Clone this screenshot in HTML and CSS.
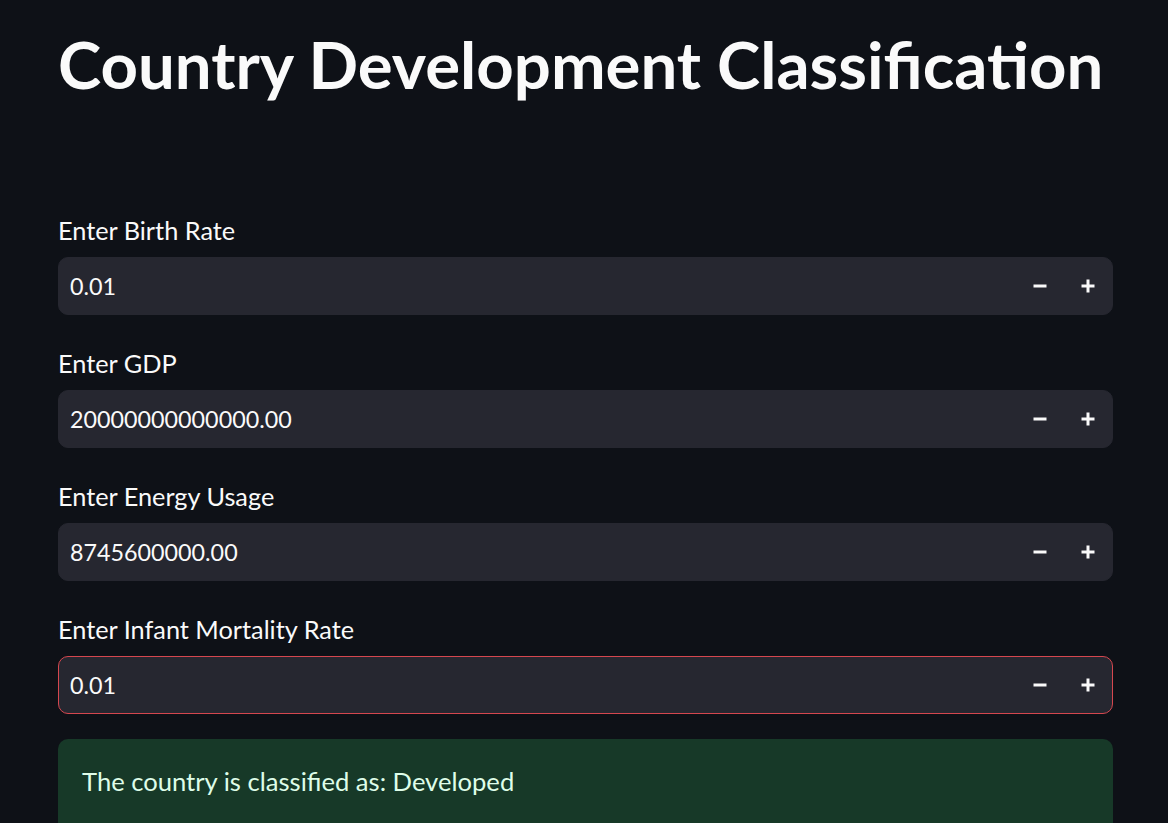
FILE: index.html
```html
<!DOCTYPE html>
<html>
<head>
<meta charset="utf-8">
<link rel="stylesheet" href="styles.css">
</head>
<body>
<main class="main">
  <h1 class="title">Country Development Classification</h1>
  <div class="fields">
    <div class="field">
      <label class="label">Enter Birth Rate</label>
      <div class="input">
        <span class="value">0.01</span>
        <span class="step"><svg width="14" height="14" viewBox="0 0 14 14"><rect x="0.5" y="5.5" width="13" height="3" fill="#fafafa"/></svg></span>
        <span class="step"><svg width="14" height="14" viewBox="0 0 14 14"><rect x="0.5" y="5.5" width="13" height="3" fill="#fafafa"/><rect x="5.5" y="0.5" width="3" height="13" fill="#fafafa"/></svg></span>
      </div>
    </div>
    <div class="field">
      <label class="label">Enter GDP</label>
      <div class="input">
        <span class="value">20000000000000.00</span>
        <span class="step"><svg width="14" height="14" viewBox="0 0 14 14"><rect x="0.5" y="5.5" width="13" height="3" fill="#fafafa"/></svg></span>
        <span class="step"><svg width="14" height="14" viewBox="0 0 14 14"><rect x="0.5" y="5.5" width="13" height="3" fill="#fafafa"/><rect x="5.5" y="0.5" width="3" height="13" fill="#fafafa"/></svg></span>
      </div>
    </div>
    <div class="field">
      <label class="label">Enter Energy Usage</label>
      <div class="input">
        <span class="value">8745600000.00</span>
        <span class="step"><svg width="14" height="14" viewBox="0 0 14 14"><rect x="0.5" y="5.5" width="13" height="3" fill="#fafafa"/></svg></span>
        <span class="step"><svg width="14" height="14" viewBox="0 0 14 14"><rect x="0.5" y="5.5" width="13" height="3" fill="#fafafa"/><rect x="5.5" y="0.5" width="3" height="13" fill="#fafafa"/></svg></span>
      </div>
    </div>
    <div class="field">
      <label class="label">Enter Infant Mortality Rate</label>
      <div class="input focused">
        <span class="value">0.01</span>
        <span class="step"><svg width="14" height="14" viewBox="0 0 14 14"><rect x="0.5" y="5.5" width="13" height="3" fill="#fafafa"/></svg></span>
        <span class="step"><svg width="14" height="14" viewBox="0 0 14 14"><rect x="0.5" y="5.5" width="13" height="3" fill="#fafafa"/><rect x="5.5" y="0.5" width="3" height="13" fill="#fafafa"/></svg></span>
      </div>
    </div>
    <div class="alert">The country is classified as: Developed</div>
  </div>
</main>
</body>
</html>
```
FILE: styles.css
```css
html, body {
  margin: 0;
  padding: 0;
  background: #0e1117;
  color: #fafafa;
  font-family: Lato, "Liberation Sans", sans-serif;
  overflow: hidden;
  height: 823px;
}
.main {
  padding: 0 55px 0 58px;
}
.title {
  margin: 0;
  padding-top: 25px;
  font-size: 65.3px;
  font-weight: 700;
  line-height: 78px;
  color: #fafafa;
}
.fields {
  margin-top: 112px;
  display: flex;
  flex-direction: column;
  gap: 33px;
}
.field {
  display: flex;
  flex-direction: column;
}
.label {
  font-size: 25.3px;
  line-height: 30px;
  margin-bottom: 12px;
  color: #fafafa;
}
.input {
  height: 58px;
  box-sizing: border-box;
  background: #262730;
  border: 1px solid #262730;
  border-radius: 10px;
  display: flex;
  align-items: center;
  padding-left: 11px;
  padding-right: 0;
}
.input.focused {
  border-color: #d5474f;
}
.value {
  flex: 1;
  font-size: 23.3px;
  color: #fafafa;
}
.step {
  width: 48px;
  height: 100%;
  display: flex;
  align-items: center;
  justify-content: center;
}
.alert {
  margin-top: -8px;
  background: #173928;
  border-radius: 10px;
  color: #dffde9;
  font-size: 25.6px;
  padding: 27px 24px;
  height: 120px;
  box-sizing: border-box;
}
```
